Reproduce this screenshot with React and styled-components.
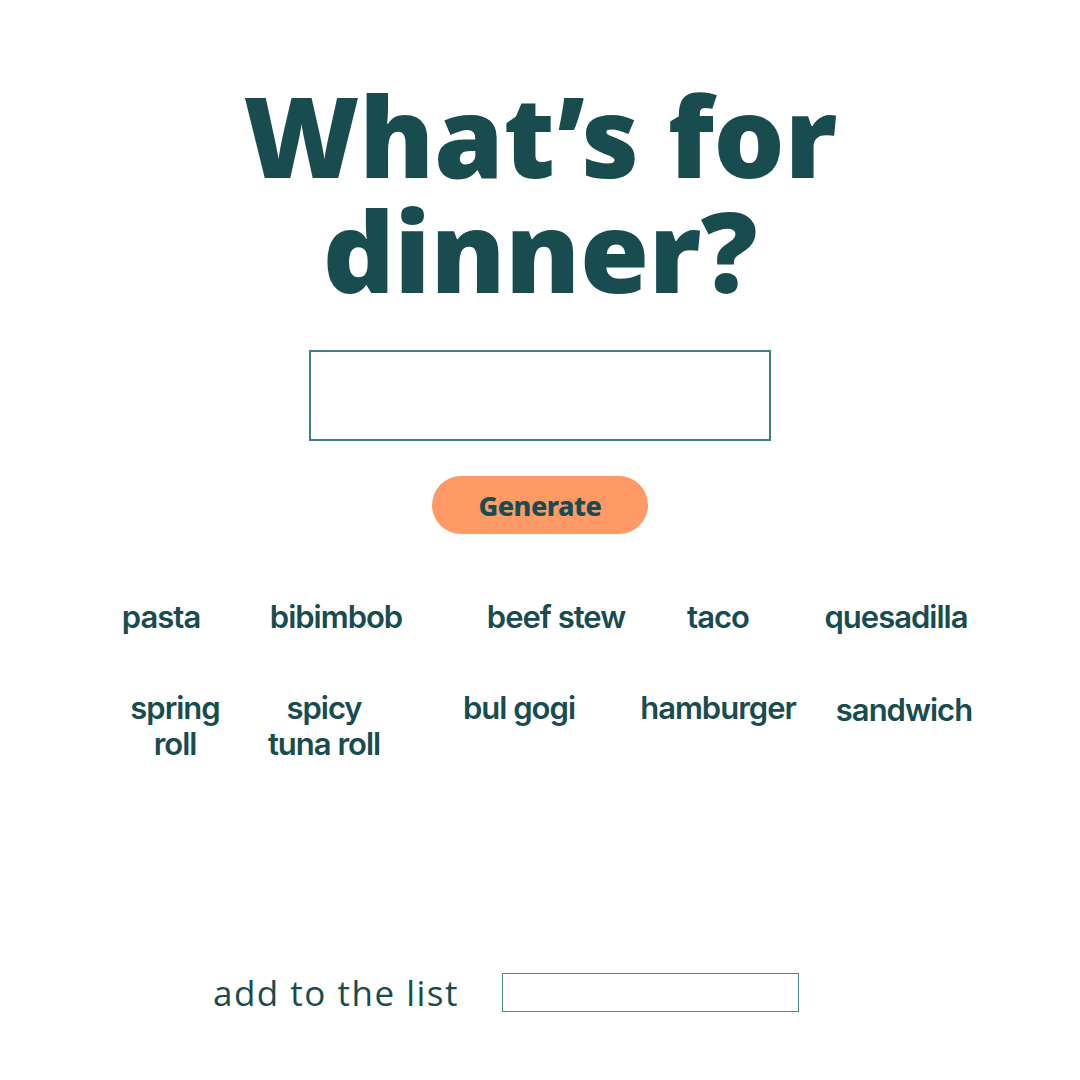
import React from 'react';
import styled, { createGlobalStyle } from 'styled-components';

const GlobalStyle = createGlobalStyle`
  body {
    margin: 0;
    background: #ffffff;
  }
`;

const Page = styled.div`
  width: 1080px;
  height: 1080px;
  display: flex;
  flex-direction: column;
  align-items: center;
  color: #184c4f;
  font-family: 'Noto Sans', sans-serif;
`;

const Title = styled.h1`
  margin: 77px 0 0;
  font-family: 'Noto Sans', sans-serif;
  font-weight: 900;
  font-size: 112px;
  line-height: 115px;
  letter-spacing: -0.3px;
  text-align: center;
  color: #184c4f;
`;

const SearchBox = styled.input`
  margin-top: 43px;
  width: 462px;
  height: 91px;
  box-sizing: border-box;
  border: 2px solid #3f8088;
  background: #fff;
  outline: none;
`;

const GenerateButton = styled.button`
  margin-top: 35px;
  width: 216px;
  height: 58px;
  border: none;
  border-radius: 29px;
  background: #ff9966;
  color: #184c4f;
  font-family: 'Noto Sans', sans-serif;
  font-weight: 800;
  font-size: 27px;
  letter-spacing: -0.5px;
  cursor: pointer;
`;

const FoodGrid = styled.div`
  margin-top: 65px;
  width: 1080px;
  display: grid;
  grid-template-columns: 168px 162px 208px 180px 182px;
  justify-content: center;
  row-gap: 55px;
`;

const Food = styled.div`
  position: relative;
  left: ${(p) => p.shift || 0}px;
  top: ${(p) => p.lift || 0}px;
  text-align: center;
  font-family: 'Inter', sans-serif;
  font-weight: 600;
  font-size: 31px;
  line-height: 36px;
  letter-spacing: -1px;
  white-space: nowrap;
  color: #184c4f;
`;

const AddRow = styled.div`
  margin-top: auto;
  margin-bottom: 64px;
  display: flex;
  align-items: center;
  gap: 43px;
  margin-left: -68px;
`;

const AddLabel = styled.label`
  font-family: 'Open Sans', sans-serif;
  font-weight: 400;
  font-size: 35px;
  letter-spacing: 1.5px;
  color: #184c4f;
`;

const AddInput = styled.input`
  width: 297px;
  height: 39px;
  box-sizing: border-box;
  border: 1px solid #4a8a90;
  outline: none;
`;

const foods = [
  { lines: ['pasta'], shift: -13 },
  { lines: ['bibimbob'], shift: -3 },
  { lines: ['beef stew'], shift: 32 },
  { lines: ['taco'], shift: 0 },
  { lines: ['quesadilla'], shift: -3 },
  { lines: ['spring', 'roll'], shift: 1 },
  { lines: ['spicy', 'tuna roll'], shift: -15 },
  { lines: ['bul gogi'], shift: -5 },
  { lines: ['hamburger'], shift: 0 },
  { lines: ['sandwich'], shift: 5, lift: 2 },
];

export default function App() {
  return (
    <>
      <GlobalStyle />
      <Page>
        <Title>
          What’s for
          <br />
          dinner?
        </Title>
        <SearchBox type="text" />
        <GenerateButton>Generate</GenerateButton>
        <FoodGrid>
          {foods.map((f) => (
            <Food key={f.lines.join(' ')} shift={f.shift} lift={f.lift}>
              {f.lines.map((line, i) => (
                <React.Fragment key={line}>
                  {i > 0 && <br />}
                  {line}
                </React.Fragment>
              ))}
            </Food>
          ))}
        </FoodGrid>
        <AddRow>
          <AddLabel>add to the list</AddLabel>
          <AddInput type="text" />
        </AddRow>
      </Page>
    </>
  );
}
